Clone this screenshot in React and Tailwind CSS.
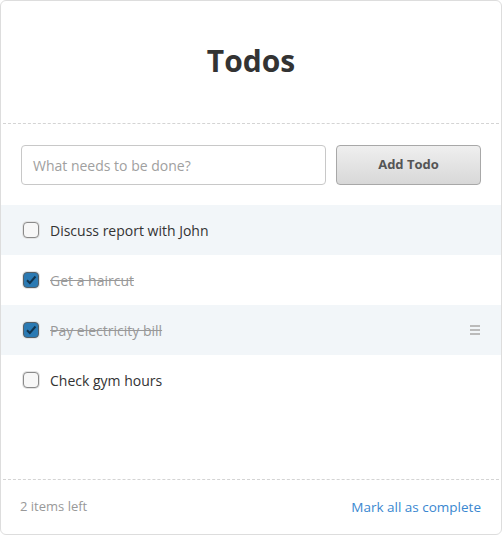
export default function App() {
  const todos = [
    { text: "Discuss report with John", done: false },
    { text: "Get a haircut", done: true },
    { text: "Pay electricity bill", done: true, handle: true },
    { text: "Check gym hours", done: false },
  ];

  return (
    <div
      className="w-[502px] h-[535px] bg-white"
      style={{ fontFamily: '"Open Sans", sans-serif' }}
    >
      <div className="h-full flex flex-col border border-[#dddddd] rounded-[6px] bg-white">
        {/* HEADER */}
        <div className="h-[123px] flex items-center justify-center border-b border-dashed border-[#d4d4d4] mx-[2px]">
          <h1 className="text-[30px] font-bold text-[#333333] leading-none -mt-[3px]">
            Todos
          </h1>
        </div>

        {/* FORM */}
        <div className="flex gap-[10px] px-[20px] pt-[21px] pb-[20px]">
          <div className="flex-1 h-[40px] border border-[#c8c8c8] rounded-[4px] flex items-center px-[11px]">
            <span className="text-[14px] text-[#a0a0a0]">What needs to be done?</span>
          </div>
          <div className="w-[145px] h-[40px] border border-[#a8a8a8] rounded-[4px] bg-linear-to-b from-[#efefef] to-[#d8d8d8] flex items-center justify-center">
            <span className="text-[13px] font-bold text-[#555555]">Add Todo</span>
          </div>
        </div>

        {/* LIST */}
        <ul>
          {todos.map((todo, i) => (
            <li
              key={i}
              className={`h-[50px] flex items-center pl-[21px] pr-[20px] ${
                i % 2 === 0 ? "bg-[#f2f6f9]" : "bg-white"
              }`}
            >
              <Checkbox checked={todo.done} />
              <span
                className={`ml-[10px] text-[14px] ${
                  todo.done ? "text-[#999999] line-through" : "text-[#333333]"
                }`}
              >
                {todo.text}
              </span>
              {todo.handle && (
                <div className="ml-auto mr-[1px] flex flex-col gap-[2px]">
                  <div className="w-[10px] h-[2px] bg-[#bbbbbb]" />
                  <div className="w-[10px] h-[2px] bg-[#bbbbbb]" />
                  <div className="w-[10px] h-[2px] bg-[#bbbbbb]" />
                </div>
              )}
            </li>
          ))}
        </ul>

        {/* FOOTER */}
        <div className="mt-auto mx-[2px] border-t border-dashed border-[#d4d4d4] h-[55px] flex items-center justify-between pl-[17px] pr-[18px]">
          <span className="text-[13px] text-[#999999]">2 items left</span>
          <span className="text-[13.5px] text-[#3a87d0]">Mark all as complete</span>
        </div>
      </div>
    </div>
  );
}

function Checkbox({ checked }) {
  return (
    <div className="w-[18px] h-[18px] rounded-[5px] bg-[#e4e4e4] p-[1px]">
      <div
        className={`w-full h-full rounded-[4px] border flex items-center justify-center ${
          checked
            ? "bg-[#2b7ab3] border-[#555f66]"
            : "bg-[#f7f7f7] border-[#8a8a8a]"
        }`}
      >
        {checked && (
          <svg width="12" height="12" viewBox="0 0 12 12">
            <path
              d="M2 6.2 L4.8 9 L10.5 2.5"
              fill="none"
              stroke="#10344f"
              strokeWidth="2"
            />
          </svg>
        )}
      </div>
    </div>
  );
}
